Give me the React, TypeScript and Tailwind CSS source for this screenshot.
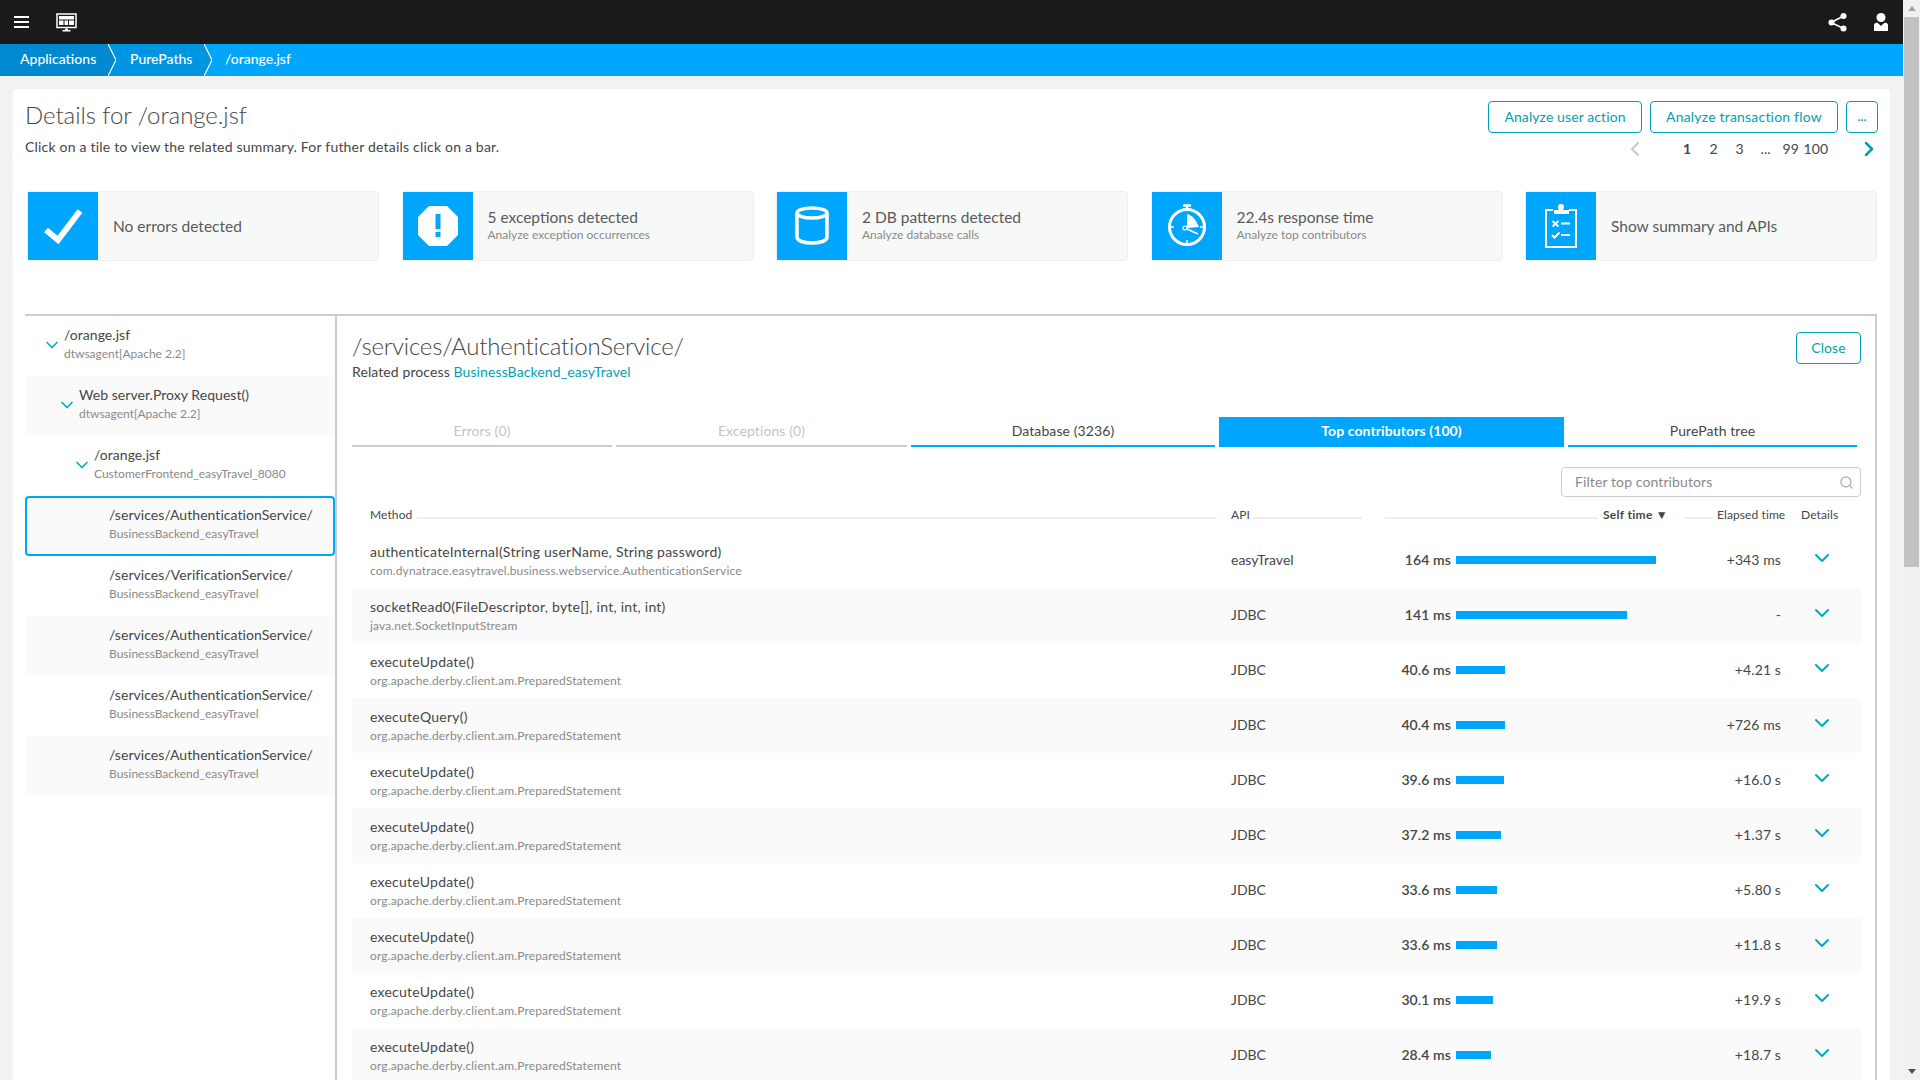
import React from "react";
import { ChevronDown, ChevronLeft, ChevronRight, Search } from "lucide-react";

const IconCheck = () => (
    <svg width="70" height="68" viewBox="0 0 70 68" fill="none" stroke="white" strokeWidth="6">
        <polyline points="18,38 30,48 52,19" />
    </svg>
);

const IconException = () => (
    <svg width="70" height="68" viewBox="0 0 70 68">
        <polygon fill="white" points="26,14 44,14 55,25 55,43 44,54 26,54 15,43 15,25" />
        <rect x="32.5" y="22" width="5" height="15" fill="#00a6fb" />
        <rect x="32.5" y="40" width="5" height="5" fill="#00a6fb" />
    </svg>
);

const IconDatabase = () => (
    <svg width="70" height="68" viewBox="0 0 70 68" fill="none" stroke="white" strokeWidth="3.5">
        <ellipse cx="35" cy="21" rx="15" ry="5" />
        <path d="M20 21v24c0 4 7 6 15 6s15-2 15-6V21" />
    </svg>
);

const IconStopwatch = () => (
    <svg width="70" height="68" viewBox="0 0 70 68" fill="none" stroke="white">
        <circle cx="35" cy="35" r="17.5" strokeWidth="3" />
        <path d="M35 17v-3M31 13.5h8" strokeWidth="2.5" />
        <path d="M35 48v4M18 35h4M48 35h4" strokeWidth="1.5" />
        <path d="M35 22c4 1 8 4 10 9l2 4-12 1z" fill="white" stroke="none" />
        <circle cx="33" cy="36" r="2" strokeWidth="1.2" fill="#00a6fb" />
        <path d="M35 37l11 5" strokeWidth="1.5" />
    </svg>
);

const IconClipboard = () => (
    <svg width="70" height="68" viewBox="0 0 70 68" fill="none" stroke="white" strokeWidth="2">
        <path d="M27 18h-7v37h30V18h-7" />
        <path d="M28 22v-4h5a2.5 2.5 0 1 1 4 0h6v4z" fill="white" stroke="none" />
        <circle cx="35" cy="15" r="3" fill="white" stroke="none" />
        <path d="M26.5 29l6 5.5M32.5 29l-6 5.5M35 31.500h9" />
        <path d="M26 43l2.500 2.500 5-5M35 43h9" />
    </svg>
);

const crumbs = [
    { label: "Applications", width: "w-[108px] pl-5", bg: "bg-[#0089d0]", fill: "#0089d0", next: "#0095e2" },
    { label: "PurePaths", width: "w-[88px] pl-[14px]", bg: "bg-[#0095e2]", fill: "#0095e2", next: "#00a6fb" },
];

const tiles = [
    { icon: <IconCheck />, title: "No errors detected" },
    { icon: <IconException />, title: "5 exceptions detected", sub: "Analyze exception occurrences" },
    { icon: <IconDatabase />, title: "2 DB patterns detected", sub: "Analyze database calls" },
    { icon: <IconStopwatch />, title: "22.4s response time", sub: "Analyze top contributors" },
    { icon: <IconClipboard />, title: "Show summary and APIs" },
];

const tree = [
    { title: "/orange.jsf", sub: "dtwsagent[Apache 2.2]", pad: "pl-[39px]", chevron: true },
    { title: "Web server.Proxy Request()", sub: "dtwsagent[Apache 2.2]", pad: "pl-[54px]", chevron: true, alt: true },
    { title: "/orange.jsf", sub: "CustomerFrontend_easyTravel_8080", pad: "pl-[69px]", chevron: true },
    { title: "/services/AuthenticationService/", sub: "BusinessBackend_easyTravel", pad: "pl-[82px]", selected: true },
    { title: "/services/VerificationService/", sub: "BusinessBackend_easyTravel", pad: "pl-[84px]" },
    { title: "/services/AuthenticationService/", sub: "BusinessBackend_easyTravel", pad: "pl-[84px]", alt: true },
    { title: "/services/AuthenticationService/", sub: "BusinessBackend_easyTravel", pad: "pl-[84px]" },
    { title: "/services/AuthenticationService/", sub: "BusinessBackend_easyTravel", pad: "pl-[84px]", alt: true },
];

const tabs = [
    { label: "Errors (0)", width: "w-[260px]", cls: "text-[#c4c4c4] border-[#cccccc]" },
    { label: "Exceptions (0)", width: "w-[291px]", cls: "text-[#c4c4c4] border-[#cccccc]" },
    { label: "Database (3236)", width: "w-[304px]", cls: "text-[#454646] border-[#00a6fb]" },
    { label: "Top contributors (100)", width: "w-[345px]", cls: "text-white bg-[#00a6fb] border-[#00a6fb] font-bold" },
    { label: "PurePath tree", width: "w-[289px]", cls: "text-[#454646] border-[#00a6fb]" },
];

const PS = "org.apache.derby.client.am.PreparedStatement";
const methods = [
    { name: "authenticateInternal(String userName, String password)", cls: "com.dynatrace.easytravel.business.webservice.AuthenticationService", api: "easyTravel", self: "164 ms", bar: 200, elapsed: "+343 ms" },
    { name: "socketRead0(FileDescriptor, byte[], int, int, int)", cls: "java.net.SocketInputStream", api: "JDBC", self: "141 ms", bar: 171, elapsed: "-" },
    { name: "executeUpdate()", cls: PS, api: "JDBC", self: "40.6 ms", bar: 49, elapsed: "+4.21 s" },
    { name: "executeQuery()", cls: PS, api: "JDBC", self: "40.4 ms", bar: 49, elapsed: "+726 ms" },
    { name: "executeUpdate()", cls: PS, api: "JDBC", self: "39.6 ms", bar: 48, elapsed: "+16.0 s" },
    { name: "executeUpdate()", cls: PS, api: "JDBC", self: "37.2 ms", bar: 45, elapsed: "+1.37 s" },
    { name: "executeUpdate()", cls: PS, api: "JDBC", self: "33.6 ms", bar: 41, elapsed: "+5.80 s" },
    { name: "executeUpdate()", cls: PS, api: "JDBC", self: "33.6 ms", bar: 41, elapsed: "+11.8 s" },
    { name: "executeUpdate()", cls: PS, api: "JDBC", self: "30.1 ms", bar: 37, elapsed: "+19.9 s" },
    { name: "executeUpdate()", cls: PS, api: "JDBC", self: "28.4 ms", bar: 35, elapsed: "+18.7 s" },
];

export default function App() {
    return (
        <div className="flex h-screen overflow-hidden bg-[#f2f2f2] font-['Lato',sans-serif] tracking-[0.1px] text-[#454646]">
            <div className="flex w-[1903px] flex-col">
                {/* Top bar */}
                <div className="flex h-11 shrink-0 items-center justify-between bg-[#1a1a1a]">
                    <div className="flex items-center">
                        <svg width="16" height="14" viewBox="0 0 16 14" fill="white" className="ml-[14px]">
                            <rect y="1" width="15" height="2" />
                            <rect y="6" width="15" height="2" />
                            <rect y="11" width="15" height="2" />
                        </svg>
                        <svg width="21" height="19" viewBox="0 0 21 19" className="ml-[26px]">
                            <rect x="1" y="1" width="19" height="13.500" fill="none" stroke="white" strokeWidth="1.500" />
                            <path d="M3 3h15v3.500H3zM3 7.500h4.500V12H3zM8.500 7.500H12V12H8.500zM13 7.500h5V12h-5z" fill="white" />
                            <path d="M9 15.500h3V17h2.500v1.500h-8V17H9z" fill="white" />
                        </svg>
                    </div>
                    <div className="flex items-center">
                        <svg width="20" height="20" viewBox="0 0 20 20" fill="white" stroke="white" strokeWidth="1.500">
                            <path d="M15.500 4L3 10.500l12.500 6" fill="none" />
                            <circle cx="15.500" cy="4" r="2.300" />
                            <circle cx="3.500" cy="10.500" r="2.300" />
                            <circle cx="15.500" cy="16.500" r="2.300" />
                        </svg>
                        <svg width="16" height="20" viewBox="0 0 16 20" fill="white" className="ml-[25px] mr-[14px]">
                            <circle cx="8" cy="5.500" r="4.500" />
                            <path d="M1 13c0-1 1-2 3-2.500l2.500 2 1.500 1.500 1.500-1.500 2.500-2c2 .5 3 1.500 3 2.500v6H1z" />
                        </svg>
                    </div>
                </div>

                {/* Breadcrumb */}
                <div className="flex h-8 shrink-0 items-center bg-[#00a6fb] text-sm font-medium tracking-normal text-white">
                    {crumbs.map((c) => (
                        <React.Fragment key={c.label}>
                            <div className={`${c.width} ${c.bg} flex h-8 items-center pb-[2px]`}>{c.label}</div>
                            <svg width="8" height="32" viewBox="0 0 8 32" className="shrink-0">
                                <rect width="8" height="32" fill={c.next} />
                                <polygon points="0,0 8,16 0,32" fill={c.fill} />
                                <polyline points="0,0 8,16 0,32" fill="none" stroke="white" strokeWidth="1.200" />
                            </svg>
                        </React.Fragment>
                    ))}
                    <div className="pb-[2px] pl-[13px]">/orange.jsf</div>
                </div>

                {/* Page */}
                <div className="min-h-0 flex-1 pl-[13px] pt-[13px]">
                    <div className="h-full w-[1877px] rounded-t-sm bg-white pl-3 pr-3 pt-3">
                        <div className="flex justify-between">
                            <div>
                                <h1 className="-mt-[2px] text-2xl font-light leading-[32px] tracking-[-0.05px]">Details for /orange.jsf</h1>
                                <p className="mt-[6px] text-sm leading-5 tracking-[0.2px]">Click on a tile to view the related summary. For futher details click on a bar.</p>
                            </div>
                            <div className="flex flex-col items-end">
                                <div className="flex gap-2">
                                    <button className="h-8 w-[154px] rounded-sm border border-[#00a1b2] text-sm text-[#00a1b2]">Analyze user action</button>
                                    <button className="h-8 w-[188px] rounded-sm border border-[#00a1b2] text-sm tracking-[0.2px] text-[#00a1b2]">Analyze transaction flow</button>
                                    <button className="h-8 w-8 rounded-sm border border-[#00a1b2] text-xs font-bold leading-none text-[#00a1b2]">...</button>
                                </div>
                                <div className="mt-[6px] flex h-5 w-[246px] items-center text-sm">
                                    <ChevronLeft size={24} strokeWidth={2} className="-ml-[9px] text-[#c8c8c8]" />
                                    <div className="ml-[36px] w-[26.500px] font-bold">1</div>
                                    <div className="w-[26px]">2</div>
                                    <div className="w-[25px]">3</div>
                                    <div className="w-[22px]">...</div>
                                    <div className="w-[21px]">99</div>
                                    <div className="w-[44px]">100</div>
                                    <ChevronRight size={24} strokeWidth={2.500} className="-mr-[3px] ml-auto text-[#00a1b2]" />
                                </div>
                            </div>
                        </div>

                        {/* Tiles */}
                        <div className="ml-[2px] mt-[32px] flex gap-[22.500px]">
                            {tiles.map((t) => (
                                <div key={t.title} className="flex h-[70px] w-[352px] items-center rounded-sm border border-[#eeeeee] bg-[#f7f8f8]">
                                    <div className="flex h-[68px] w-[70px] shrink-0 items-center justify-center bg-[#00a6fb]">{t.icon}</div>
                                    <div className="ml-[15px] min-w-0 pb-px">
                                        <div className="text-[15.500px] leading-[18px] tracking-normal text-[#5a5a5a]">{t.title}</div>
                                        {t.sub && <div className="text-xs leading-[18px] tracking-normal text-[#898989]">{t.sub}</div>}
                                    </div>
                                </div>
                            ))}
                        </div>

                        {/* Split view */}
                        <div className="mt-[53px] flex h-[800px] w-[1852px] border-r-2 border-t-2 border-[#cccccc]">
                            <div className="w-[312px] shrink-0 border-r-2 border-[#cccccc]">
                                {tree.map((n, i) => (
                                    <div
                                        key={i}
                                        className={`relative flex h-[60px] flex-col justify-center ${n.pad} ${n.alt ? "bg-[#fafafa]" : ""} ${n.selected ? "rounded-sm border-2 border-[#00a6fb] bg-[#fafafa]" : ""}`}
                                    >
                                        {n.chevron && (
                                            <ChevronDown size={20} strokeWidth={2} className="absolute top-[19px] -translate-x-[22px] text-[#00a9c4]" />
                                        )}
                                        <div className="text-sm leading-[19px] tracking-[0.05px]">{n.title}</div>
                                        <div className="pb-[4px] text-xs leading-[19px] tracking-normal text-[#898989]">{n.sub}</div>
                                    </div>
                                ))}
                            </div>

                            <div className="min-w-0 flex-1 pl-[15px] pr-[14px] pt-[14px]">
                                <div className="flex justify-between">
                                    <div>
                                        <h2 className="text-2xl font-light leading-8 tracking-[-0.2px]">/services/AuthenticationService/</h2>
                                        <p className="text-sm leading-5">
                                            Related process <span className="text-[#00a1b2]">BusinessBackend_easyTravel</span>
                                        </p>
                                    </div>
                                    <button className="mt-[2px] h-8 w-[65px] rounded-sm border border-[#00a1b2] text-sm text-[#00a1b2]">Close</button>
                                </div>

                                <div className="mt-[35px] flex gap-1">
                                    {tabs.map((t) => (
                                        <div key={t.label} className={`flex h-[30px] items-center justify-center border-b-2 text-sm ${t.width} ${t.cls}`}>
                                            {t.label}
                                        </div>
                                    ))}
                                </div>

                                <div className="mt-5 flex justify-end">
                                    <div className="flex h-[30px] w-[300px] items-center justify-between rounded-sm border border-[#cccccc] pl-[13px] pr-[6px] text-sm text-[#898989]">
                                        Filter top contributors
                                        <Search size={15} className="text-[#aaaaaa]" />
                                    </div>
                                </div>

                                <div className="mt-2 flex h-5 items-center text-xs">
                                    <div className="ml-[18px] w-[47px]">Method</div>
                                    <div className="mt-[6px] h-[2px] w-[800px] bg-[#eeeeee]" />
                                    <div className="ml-[14px] w-[22px]">API</div>
                                    <div className="mt-[6px] h-[2px] w-[109px] bg-[#eeeeee]" />
                                    <div className="ml-[23px] mt-[6px] h-[2px] w-[213px] bg-[#eeeeee]" />
                                    <div className="ml-[5px] w-[82px] font-bold tracking-[0.3px]">Self time ▼</div>
                                    <div className="mt-[6px] h-[2px] w-[28px] bg-[#eeeeee]" />
                                    <div className="ml-[4px] w-[84px]">Elapsed time</div>
                                    <div>Details</div>
                                </div>

                                <div className="mt-2">
                                    {methods.map((m, i) => (
                                        <div key={i} className={`flex h-[55px] items-center ${i % 2 === 1 ? "bg-[#fafafa]" : ""}`}>
                                            <div className="w-[879px] shrink-0 pl-[18px] pt-px">
                                                <div className="text-sm leading-[19px] tracking-[0.25px]">{m.name}</div>
                                                <div className="text-xs leading-[19px] tracking-[0.15px] text-[#898989]">{m.cls}</div>
                                            </div>
                                            <div className="w-[150px] shrink-0 pb-[2px] text-sm tracking-normal">{m.api}</div>
                                            <div className="w-[70px] shrink-0 pb-[2px] text-right text-sm font-semibold">{m.self}</div>
                                            <div className="ml-[5px] w-[225px] shrink-0 pb-[2px]">
                                                <div className="h-2 bg-[#00a6fb]" style={{ width: m.bar }} />
                                            </div>
                                            <div className="w-[100px] shrink-0 pb-[2px] text-right text-sm">{m.elapsed}</div>
                                            <div className="flex w-[80px] justify-center pb-[5px] pl-[2px]">
                                                <ChevronDown size={24} strokeWidth={2} className="text-[#00a9c4]" />
                                            </div>
                                        </div>
                                    ))}
                                </div>
                            </div>
                        </div>
                    </div>
                </div>
            </div>

            {/* Scrollbar */}
            <div className="flex w-[17px] shrink-0 flex-col items-center bg-[#f1f1f1]">
                <div className="flex h-[17px] items-center justify-center">
                    <div className="h-0 w-0 border-x-[4px] border-b-[5px] border-x-transparent border-b-[#a3a3a3]" />
                </div>
                <div className="h-[550px] w-[15px] bg-[#c1c1c1]" />
                <div className="flex-1" />
                <div className="flex h-[17px] items-center justify-center">
                    <div className="h-0 w-0 border-x-[4px] border-t-[5px] border-x-transparent border-t-[#505050]" />
                </div>
            </div>
        </div>
    );
}
